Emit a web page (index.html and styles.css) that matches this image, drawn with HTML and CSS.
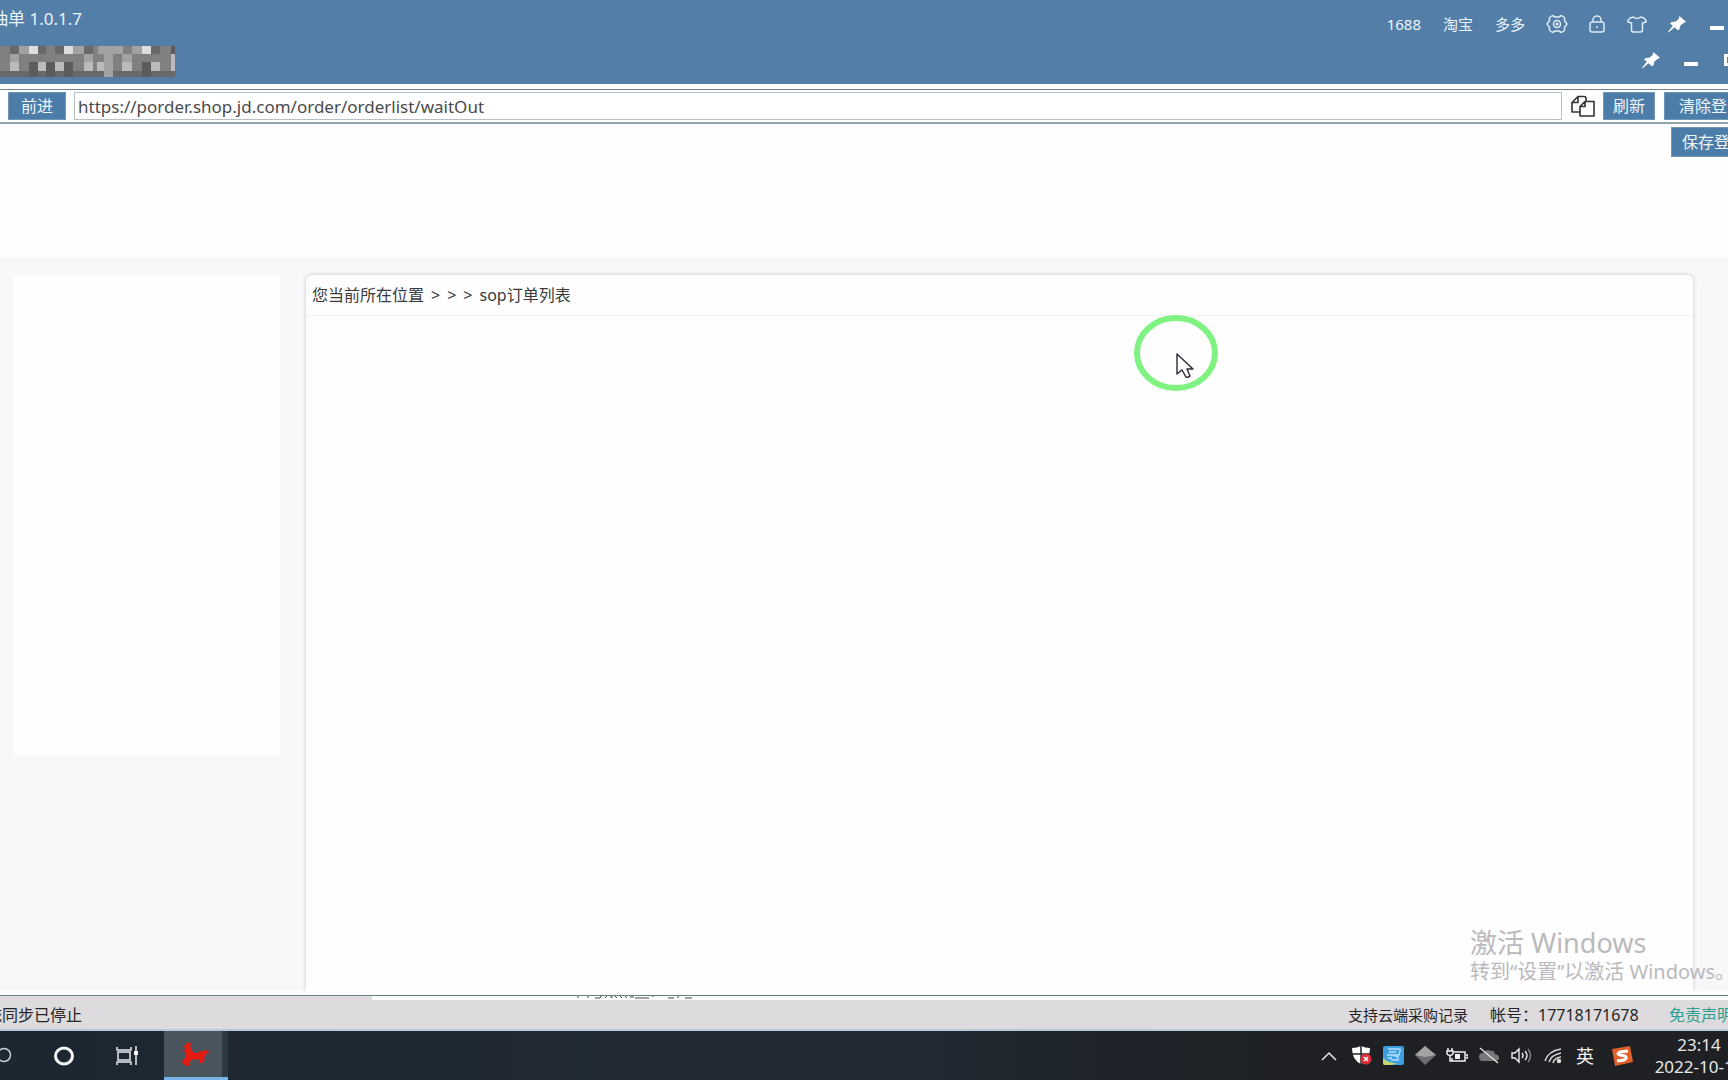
FILE: index.html
```html
<!DOCTYPE html>
<html lang="zh-CN">
<head>
<meta charset="utf-8">
<title>抽单 1.0.1.7</title>
<link rel="stylesheet" href="styles.css">
</head>
<body>
<svg class="defs" aria-hidden="true">
  <symbol id="pin" viewBox="0 0 20 20"><path d="M12.5 1 19.5 7 17 8.300 13.600 11 12.500 15.200 10.800 16 7.400 12.800 1 18.500 .4 18 5.500 11.300 2.600 8.600 4.500 7.300 8.800 6.800 11.800 4z" fill="#fff"/></symbol>
</svg>
<div class="app">
  <header class="header">
    <div class="titlebar">
      <h1 class="title clip-start"><span>抽单 1.0.1.7</span></h1>
      <nav class="top-links">
        <a href="#">1688</a><a href="#">淘宝</a><a href="#">多多</a>
      </nav>
      <div class="top-tools">
        <button class="icon-btn" aria-label="设置"><svg width="22" height="20" viewBox="0 0 22 20" fill="none" stroke="#dcebf6" stroke-width="1.500" stroke-linejoin="round"><path d="M6.500 1.500 9 3h4l2.500-1.500 3 2v3L21 10l-2.500 3.500v3l-3 2L13 17H9l-2.500 1.500-3-2v-3L1 10l2.500-3.500v-3z"/><circle cx="11" cy="10" r="3.500"/><circle cx="11" cy="10" r=".8"/></svg></button>
        <button class="icon-btn" aria-label="锁定"><svg width="16" height="18" viewBox="0 0 16 18" fill="none" stroke="#dcebf6" stroke-width="1.500"><rect x="1" y="7" width="14" height="10" rx="2"/><path d="M4 7V4.500a4 3.500 0 0 1 8 0V7M8 11v2"/></svg></button>
        <button class="icon-btn" aria-label="皮肤"><svg width="20" height="17" viewBox="0 0 20 17" fill="none" stroke="#dcebf6" stroke-width="1.500" stroke-linejoin="round"><path d="M6.500 1Q10 4 13.500 1L17 2q2 1.500 2 4l-3.500 1v7q0 2-2 2h-7q-2 0-2-2V7L1 6q0-2.500 2-4z"/></svg></button>
        <button class="icon-btn" aria-label="置顶"><svg width="20" height="19"><use href="#pin"/></svg></button>
        <button class="icon-btn" aria-label="最小化"><span class="minimize"></span></button>
      </div>
    </div>
    <div class="tabbar">
      <svg class="mosaic" width="175" height="31" viewBox="0 0 175 31" preserveAspectRatio="none" shape-rendering="crispEdges">
        <path fill="#807f81" d="M0 0h175v31H0z"/>
        <path fill="#69686a" d="M10 0h9v8h-9zM38 0h8v8h-8zM55 0h9v8h-9zM84 0h9v8h-9zM151 0h9v8h-9zM0 25h175v6H0z"/>
        <path fill="#dddce0" d="M29 0h9v8h-9zM64 0h9v8h-9zM142 0h9v8h-9z"/>
        <path fill="#a2a1a3" d="M19 0h10v8H19zM73 0h11v8H73zM98 0h25v8H98zM10 8h9v8h-9zM84 8h9v8h-9zM122 8h10v8h-10zM132 0h10v8h-10zM104 8h9v23h-9z"/>
        <path fill="#bbbabd" d="M10 16h9v9h-9zM38 16h8v9h-8zM55 16h9v9h-9zM84 16h9v9h-9zM97 16h7v9h-7zM122 16h10v9h-10zM151 16h9v9h-9zM171 8h4v17h-4z"/>
        <path fill="#5c5b5d" d="M29 16h9v15h-9zM46 16h9v15h-9zM64 16h9v15h-9zM142 16h9v15h-9zM171 0h4v8h-4z"/>
      </svg>
      <div class="window-tools">
        <button class="icon-btn" aria-label="置顶窗口"><svg width="20" height="19"><use href="#pin"/></svg></button>
        <button class="icon-btn" aria-label="最小化窗口"><span class="minimize"></span></button>
        <button class="icon-btn" aria-label="最大化窗口"><span class="maximize"></span></button>
      </div>
    </div>
  </header>

  <form class="toolbar">
    <button type="button" class="btn">前进</button>
    <input class="url" type="text" aria-label="网址" value="https://porder.shop.jd.com/order/orderlist/waitOut">
    <button type="button" class="copy" aria-label="复制"><svg width="24" height="22" viewBox="0 0 24 22" fill="#fff" stroke="#333" stroke-width="1.600" stroke-linejoin="round"><path d="M7 1.500h6q2 0 2 2V17H1V7.500zM7 1.500v6H1"/><path d="M14 6.500h9V21H9V11.500zM14 6.500v5H9"/></svg></button>
    <button type="button" class="btn refresh">刷新</button>
    <button type="button" class="btn btn-wide">清除登录</button>
  </form>

  <main class="page">
    <div class="page-top"><button class="btn save">保存登录</button></div>
    <div class="page-body">
      <aside class="side"></aside>
      <section class="panel">
        <p class="crumbs"><span>您当前所在位置</span><span>&gt;</span><span>&gt;</span><span>&gt;</span><span>sop订单列表</span></p>
      </section>
    </div>
    <div class="watermark"><p class="wm-title">激活 Windows</p><p class="wm-text">转到“设置”以激活 Windows。</p></div>
    <div class="cursor"><svg width="86" height="78" viewBox="0 0 86 78"><ellipse cx="43" cy="39" rx="39" ry="35" fill="none" stroke="#80f282" stroke-width="6"/><path d="M44 40v20l5-4 4 7q2 1 4-1l-3-7h6z" fill="#fff" stroke="#2d2933" stroke-width="1.400" stroke-linejoin="round"/></svg></div>
  </main>

  <footer class="status">
    <div class="status-edge"><svg width="116" height="3" viewBox="0 0 116 3" stroke="#444" fill="none"><path d="M1 0v2M11 0v2M18 2h5l1-2M28 2l2-2M33 1h3M38 0l2 2M43 0l2 2M48 0l2 2M53 1h4M58 2h14M76 0v1M91 2h6M101 0v2M108 2h7"/></svg></div>
    <div class="status-row">
      <span class="sync clip-start"><span>系统同步已停止</span></span>
      <span class="cloud">支持云端采购记录</span>
      <span class="account">帐号：17718171678</span>
      <a class="legal" href="#">免责声明</a>
    </div>
  </footer>

  <div class="taskbar">
    <button class="task search" aria-label="搜索"><svg width="12" height="18" fill="none" stroke="#c9d0d6" stroke-width="1.500"><circle cx="4" cy="8" r="6.500"/></svg></button>
    <button class="task" aria-label="Cortana"><svg width="22" height="20" viewBox="0 0 22 20" fill="none" stroke="#f2f6f9" stroke-width="3"><ellipse cx="11" cy="10" rx="8.500" ry="8"/></svg></button>
    <button class="task" aria-label="任务视图"><svg width="24" height="20" viewBox="0 0 24 20" fill="none" stroke="#e8ecef" stroke-width="1.500"><path d="M1 1v3h14V1M1 19v-3h14v3M2 6h12v8H2zM20 0v5M20 9v10"/><path d="M18 5h4v4h-4z" fill="#fff" stroke="none"/></svg></button>
    <button class="task active" aria-label="抽单"><svg width="28" height="24" viewBox="0 0 28 24"><path d="M5 1 8 0l1 2-1 3 2 1v3l3 2 3 0 2-2 2 1 2-2 5 1-1 2-2 1v2l-2 1 1 3-2 1-1 3-2-1v-3l-2-1-3 1-2-1-3 3-2 0 3 3-4 1-4-2-1-3 3-3 1-3-2-4 1-2-1-3z" fill="#e51b12"/></svg></button>
    <div class="tray">
      <svg width="16" height="10" viewBox="0 0 16 10" fill="none" stroke="#e4e6e8" stroke-width="1.500"><path d="m1 9 7-7 7 7"/></svg>
      <svg width="21" height="19" viewBox="0 0 21 19"><path d="M10 0q4 2 9 2 0 12-9 16Q1 14 1 2q5 0 9-2z" fill="#fff"/><path d="M10 0v18M1 8h18" stroke="#202225" stroke-width="1.500"/><circle cx="15" cy="13" r="5.500" fill="#d92d39"/><path d="m13 11 4 4m0-4-4 4" stroke="#fff" stroke-width="1.500"/></svg>
      <svg width="21" height="19" viewBox="0 0 21 19"><rect width="21" height="19" rx="2" fill="#3d9fe0"/><path d="M0 12q6 6 15 5l-6 2H2q-2 0-2-2z" fill="#c5d66d"/><path d="M5 3h11q2 0 1 2l-1 4H8M6 6h7M4 9h5l6 2v3H8M5 12h4" fill="none" stroke="#b4e2fb" stroke-width="1.300"/></svg>
      <svg width="21" height="19" viewBox="0 0 21 19"><path d="m10 0 11 9-11 10L0 9z" fill="#6d6d6f"/><path d="m10 0 11 9-11 2L0 9z" fill="#a3a3a4"/></svg>
      <svg width="22" height="16" viewBox="0 0 22 16" fill="none" stroke="#f0f0f0" stroke-width="1.500"><path d="M8 4h11v9H6v-3M20 7h2v3h-2M1 3h6v3q-3 3-6 0zM2 0v3M6 0v3M4 7v6h3"/><path d="M9 6h5v5H9z" fill="#f0f0f0" stroke="none"/></svg>
      <svg width="22" height="17" viewBox="0 0 22 17"><path d="M5 14a4 4 0 0 1 0-8q3-5 8-2 3-1 4 3 5 1 4 5-1 2-4 2z" fill="#777779"/><path d="m2 1 18 15" stroke="#ddd" stroke-width="1.500"/></svg>
      <svg width="21" height="17" viewBox="0 0 21 17" fill="none" stroke="#eee" stroke-width="1.400"><path d="M1 6h3l4-4v13l-4-4H1zM11 6q2 2.500 0 5M14 4q4 4.500 0 9"/><path d="M17 2q5 6.500 0 13" stroke="#888"/></svg>
      <svg width="18" height="16" viewBox="0 0 18 16" fill="none" stroke="#d5d5d5" stroke-width="1.500"><path d="M1 13Q4 3 17 1M5 14q2-7 12-9M9 15q1-5 8-6"/><circle cx="15" cy="13" r="1.500" fill="#fff"/></svg>
      <span class="ime">英</span>
      <svg width="22" height="20" viewBox="0 0 22 20"><path d="m1 3 18-3 3 16-18 4z" fill="#e0602c"/><path d="M17 5 9 6q-4 2 0 3l5 1q3 2-1 4l-7 1" fill="none" stroke="#fff" stroke-width="3"/></svg>
    </div>
    <div class="clock"><span>23:14</span><span>2022-10-10</span></div>
  </div>
</div>
</body>
</html>
```
FILE: styles.css
```css
* { box-sizing: border-box; }
body, h1, p { margin: 0; }
body {
  font: 16px/20px "Noto Sans", "Noto Sans CJK SC", sans-serif;
  color: #3a3a3c;
  background: #fefefe;
  overflow: hidden;
}
button, input { font: inherit; margin: 0; }
a { color: inherit; text-decoration: none; }
svg { display: block; flex: none; }
.defs { position: absolute; width: 0; height: 0; }
.app { display: flex; flex-direction: column; height: 100vh; overflow: hidden; }
.clip-start { display: flex; justify-content: flex-end; overflow: hidden; white-space: nowrap; }

.header { flex: none; background: #527ea7; color: #eaf4fb; padding-bottom: 7px; }
.titlebar { display: flex; height: 46px; }
.title { width: 82px; margin-right: auto; padding-top: 9px; font-size: 17px; font-weight: 400; }
.top-links { display: flex; gap: 22px; padding-top: 14px; font-size: 15px; }
.top-tools { display: flex; align-items: center; height: 48px; padding-left: 22px; gap: 20px; width: 203px; overflow: hidden; }
.icon-btn { flex: none; display: flex; align-items: center; justify-content: center; width: 20px; height: 20px; border: 0; padding: 0; background: none; }
.minimize { width: 14px; height: 4px; margin-top: 8px; background: #fff; }
.maximize { width: 14px; height: 12px; border: 3px solid #fff; }
.tabbar { display: flex; justify-content: space-between; height: 31px; }
.window-tools { display: flex; align-items: center; width: 87px; height: 28px; gap: 20px; overflow: hidden; }

.toolbar {
  flex: none; display: flex; align-items: center; height: 35px; margin-top: 5px;
  padding-left: 8px; border-top: 1px solid #71828f; border-bottom: 2px solid #91a3ad; overflow: hidden;
}
.btn { flex: none; height: 28px; padding: 0 12px; border: 1px solid #7096b5; background: #4c7ca8; color: #eef6fb; }
.url { flex: 1; min-width: 0; height: 28px; margin: 0 9px 0 8px; padding: 0 3px; border: 1px solid #b9c0c4; background: #fff; color: #4a4a4c; font-size: 17px; }
.copy { flex: none; margin-right: 8px; border: 0; padding: 0; background: none; }
.refresh { padding: 0 9px; }
.btn-wide { margin-left: 9px; width: 94px; margin-right: -30px; }

.page { flex: 1; min-height: 0; position: relative; display: flex; flex-direction: column; }
.page-top { flex: none; display: flex; justify-content: flex-end; align-items: flex-start; height: 133px; padding-top: 3px; overflow: hidden; }
.save { height: 30px; width: 86px; margin-right: -29px; padding: 0 10px; }
.page-body { flex: 1; min-height: 0; display: flex; gap: 26px; margin-bottom: 4px; padding: 18px 35px 0 13px; background: #f8f7fa; overflow: hidden; }
.side { width: 267px; height: 480px; background: #fefefe; }
.panel { flex: 1; background: #fefefe; border-radius: 6px 6px 0 0; box-shadow: 0 0 4px #c9c8cc; }
.crumbs { display: flex; gap: 7px; padding: 10px 6px; border-bottom: 1px solid #f3f1f5; }
.watermark { position: absolute; right: 0; bottom: 10px; width: 258px; color: #bab9bd; white-space: nowrap; }
.wm-title { font-size: 27px; line-height: 32px; }
.wm-text { font-size: 20px; line-height: 26px; }
.cursor { position: absolute; left: 1133px; top: 190px; }

.status { flex: none; background: #dddbdd; border-top: 1px solid #63808b; border-bottom: 2px solid #b3cadb; }
.status-edge { height: 4px; margin-left: 372px; padding-left: 205px; background: #fefefe; }
.status-row { display: flex; align-items: center; height: 29px; color: #262628; white-space: nowrap; overflow: hidden; }
.sync { width: 82px; margin-right: auto; }
.cloud { margin-right: 22px; font-size: 15px; }
.account { width: 179px; }
.legal { width: 59px; overflow: hidden; color: #2ba193; }

.taskbar { flex: none; display: flex; height: 49px; background: linear-gradient(90deg, #1d2732, #212a34 50%, #1e2024 75%); overflow: hidden; }
.task { flex: none; display: grid; place-items: center; width: 64px; border: 0; padding: 0; background: none; }
.search { width: 32px; justify-items: start; }
.active { background: linear-gradient(90deg, #4a545c 58px, #2c3a45 58px); margin-left: 4px; border-bottom: 3px solid #78b4e8; }
.tray { display: grid; grid-template-columns: repeat(9, 32px) 42px; place-items: center; margin-left: auto; }
.ime { color: #f1f1f1; font-size: 18px; }
.clock { flex: none; width: 88px; margin: 0 -15px 0 12px; padding: 3px 0; display: flex; flex-direction: column; align-items: center; color: #e8e8e8; font-size: 17px; line-height: 22px; white-space: nowrap; }
```
